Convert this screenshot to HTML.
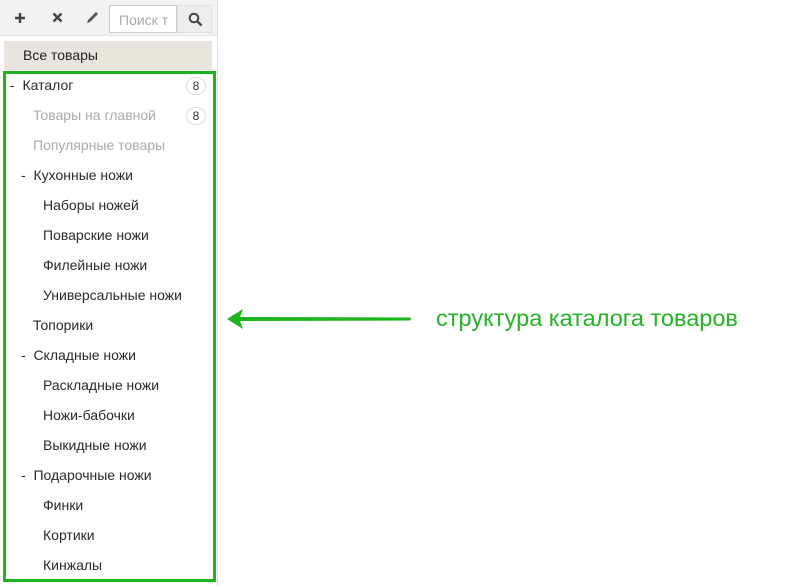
<!DOCTYPE html>
<html><head><meta charset="utf-8"><style>
*{margin:0;padding:0;box-sizing:border-box}
body{width:794px;height:586px;background:#fff;position:relative;overflow:hidden;font-family:"Liberation Sans","DejaVu Sans",sans-serif;font-size:14px;color:#333}
.side{position:absolute;left:0;top:0;width:218px;height:586px;background:#fff;border-right:1px solid #ddd}
.tb{position:absolute;left:0;top:0;width:217px;height:36px;background:#f2f2f2;border-bottom:1px solid #e4e4e4}
.search{position:absolute;left:109px;top:5px;width:68px;height:28px;background:#fff;border:1px solid #ccc;color:#aaa;font-size:14px;padding:6px 0 0 9px;overflow:hidden;white-space:nowrap}
.sbtn{position:absolute;left:177px;top:5px;width:35px;height:28px;background:#eee;border:1px solid #e0e0e0}
.all{position:absolute;left:4px;top:41px;width:208px;height:29px;background:#e8e5df;padding:6px 0 0 19px;color:#222}
.box{position:absolute;left:3px;top:71px;width:213px;height:511px;border:3px solid #1cb51c}
.r{position:absolute;height:20px;color:#2a2a2a;white-space:nowrap}
.g{color:#aaa}
.b{position:absolute;left:186px;width:20px;height:18px;border:1px solid #ddd;border-radius:9px;text-align:center;font-size:12px;line-height:16px;color:#333}
.lbl{position:absolute;left:436px;top:305px;font-size:23.5px;color:#22b422;white-space:nowrap}
</style></head><body>
<div class="side">
<div class="tb">
<svg style="position:absolute;left:14px;top:12px" width="12" height="12"><path d="M6 1V11M1 6H11" stroke="#444" stroke-width="2.4"/></svg>
<svg style="position:absolute;left:52px;top:12px" width="11" height="11"><path d="M1.5 1.5L9.5 9.5M9.5 1.5L1.5 9.5" stroke="#444" stroke-width="2.4"/></svg>
<svg style="position:absolute;left:85px;top:10px" width="15" height="15"><path d="M2 13L3 10L11 2L13 4L5 12Z" fill="#555"/></svg>
<div class="search">Поиск т</div>
<div class="sbtn"><svg style="position:absolute;left:10px;top:6px" width="15" height="15"><circle cx="6" cy="6" r="4.3" stroke="#444" stroke-width="2" fill="none"/><path d="M9 9L13.5 13.5" stroke="#444" stroke-width="2.4"/></svg></div>
</div>
<div class="all">Все товары</div>
<div class="box"></div>
<div class="r" style="left:10px;top:77px">-&nbsp;&nbsp;Каталог</div><div class="b" style="top:77px">8</div>
<div class="r g" style="left:33px;top:107px">Товары на главной</div><div class="b" style="top:107px">8</div>
<div class="r g" style="left:33px;top:137px">Популярные товары</div>
<div class="r" style="left:21px;top:167px">-&nbsp;&nbsp;Кухонные ножи</div>
<div class="r" style="left:43px;top:197px">Наборы ножей</div>
<div class="r" style="left:43px;top:227px">Поварские ножи</div>
<div class="r" style="left:43px;top:257px">Филейные ножи</div>
<div class="r" style="left:43px;top:287px">Универсальные ножи</div>
<div class="r" style="left:33px;top:317px">Топорики</div>
<div class="r" style="left:21px;top:347px">-&nbsp;&nbsp;Складные ножи</div>
<div class="r" style="left:43px;top:377px">Раскладные ножи</div>
<div class="r" style="left:43px;top:407px">Ножи-бабочки</div>
<div class="r" style="left:43px;top:437px">Выкидные ножи</div>
<div class="r" style="left:21px;top:467px">-&nbsp;&nbsp;Подарочные ножи</div>
<div class="r" style="left:43px;top:497px">Финки</div>
<div class="r" style="left:43px;top:527px">Кортики</div>
<div class="r" style="left:43px;top:557px">Кинжалы</div>
</div>
<svg style="position:absolute;left:0;top:0" width="794" height="586"><path d="M227 319L243 309L240 317L410 317.5Q412 319 410 320.5L240 321L243 329Z" fill="#1cb51c"/></svg>
<div class="lbl">структура каталога товаров</div>
</body></html>
